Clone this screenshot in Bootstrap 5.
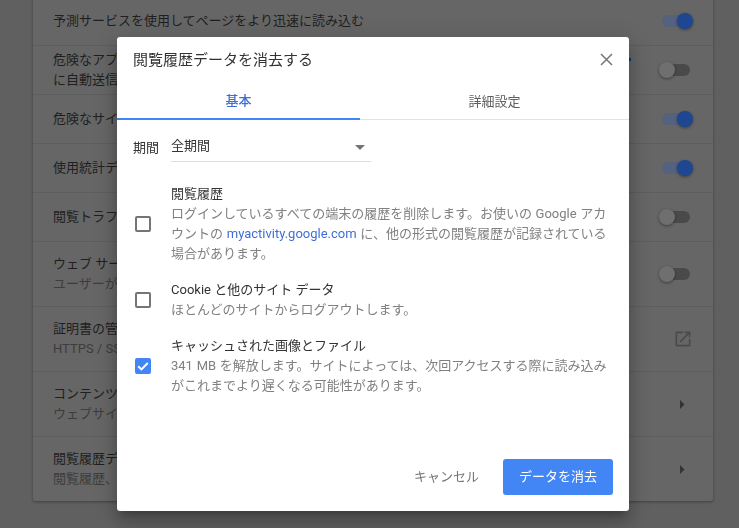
<!DOCTYPE html>
<html lang="ja">
<head>
<meta charset="utf-8">
<title>閲覧履歴データを消去する</title>
<link href="https://cdn.jsdelivr.net/npm/bootstrap@5.3.0/dist/css/bootstrap.min.css" rel="stylesheet">
<style>
html,body{height:528px;overflow:hidden}
body{background:#606060;font-family:Roboto,"Noto Sans CJK JP",sans-serif;font-size:13px;line-height:20px;color:#333}
.sheet{width:680px;margin:-3px 0 0 33px;height:504px;background:#666;border-radius:2px;box-shadow:0 1px 3px rgba(0,0,0,.35)}
.setrow{padding:0 20px;border-bottom:1px solid #5e5e5e;color:#1f1f1f;white-space:nowrap}
.rh1{height:49px}.rh2{height:65px}.rh3{height:64px;border-bottom:0}
.subt{color:#3d3d3d}
.wide-text{width:576px}
.peek{width:2px;height:3px;margin:-21px 0 0 0;background:#163566;flex:none}
.slot{width:34px;flex:none}
.tog{position:relative;width:34px;height:16px}
.tog::before{content:"";position:absolute;left:3px;right:3px;top:2px;height:12px;border-radius:6px;background:#4a4a4a}
.tog i{position:absolute;top:0;left:0;width:16px;height:16px;border-radius:50%;background:#6f6f6f;box-shadow:0 1px 3px rgba(0,0,0,.4)}
.tog.on::before{background:#54617f}
.tog.on i{left:18px;background:#1f4690}
.dlg-wrap{--bs-modal-width:512px;width:512px;max-width:none;margin:37px 0 0 117px}
.dlg{height:474px;border:0;border-radius:3px;box-shadow:0 12px 16px 1px rgba(0,0,0,.16),0 4px 22px 3px rgba(0,0,0,.14),0 6px 7px -4px rgba(0,0,0,.22)}
.dlg-head{padding:13px 16px 0;height:47px}
.dlg-title{font-size:15px;line-height:20px;color:#333}
.shut{width:13px;height:13px;padding:0;margin-top:3px;background:none;border:0;line-height:0}
.tabbar{height:36px;border-bottom:1px solid #e2e2e2}
.tabit{height:36px;line-height:30px;padding:0;border:0;border-radius:0;background:none;color:#5f5f5f;font-size:13px;text-align:center}
.tabit.first{width:243px;font-weight:500;color:#3f6fd6;border-bottom:2px solid #4285f4}
.tabit.second{width:269px}
.dlg-body{padding:16px 16px 0}
.rangerow{margin-bottom:22px}
.rangebox{width:200px;height:29px;margin-left:12px;padding-right:6px;border-bottom:1px solid #dcdcdc;color:#333;margin-top:-3px}
.rangeval{padding-bottom:2px}
.rangelab{color:#333;padding-bottom:3px}
.entrow{margin-top:16px}
.chk{width:16px;height:16px;flex:none;margin:0 20px 0 2px;border:2px solid #757575;border-radius:2px;line-height:0}
.chk.yes{background:#4285f4;border-color:#4285f4}
.ent{width:442px;color:#333}
.ent-sub{color:#808080;word-spacing:.5px}
.ent-sub a{color:#3f6fd6;text-decoration:none}
.dlg-foot{margin-top:auto;padding:0 16px 16px 0}
.nobtn{color:#757575;font-size:13px;padding:0;margin-right:24px;border:0;background:none}
.gobtn{width:110px;height:36px;padding:0;font-size:13px;color:#fff;border-radius:3px;background:#4285f4;border:0}
</style>
</head>
<body>
<div class="sheet">
  <div class="setrow rh1 d-flex align-items-center justify-content-between"><div>予測サービスを使用してページをより迅速に読み込む</div><div class="slot"><div class="tog on"><i></i></div></div></div>
  <div class="setrow rh1 d-flex align-items-center"><div class="wide-text">危険なアプ<br>に自動送信</div><div class="peek"></div><div class="slot ms-auto"><div class="tog"><i></i></div></div></div>
  <div class="setrow rh1 d-flex align-items-center justify-content-between"><div>危険なサイ</div><div class="slot"><div class="tog on"><i></i></div></div></div>
  <div class="setrow rh1 d-flex align-items-center justify-content-between"><div>使用統計デ</div><div class="slot"><div class="tog on"><i></i></div></div></div>
  <div class="setrow rh1 d-flex align-items-center justify-content-between"><div>閲覧トラフ</div><div class="slot"><div class="tog"><i></i></div></div></div>
  <div class="setrow rh2 d-flex align-items-center justify-content-between"><div>ウェブ サー<div class="subt">ユーザーが</div></div><div class="slot"><div class="tog"><i></i></div></div></div>
  <div class="setrow rh2 d-flex align-items-center justify-content-between"><div>証明書の管<div class="subt">HTTPS / SS</div></div><div class="slot d-flex justify-content-end"><svg width="20" height="20" viewBox="0 0 24 24" fill="#4a4a4a"><path d="M19 19H5V5h7V3H5c-1.11 0-2 .9-2 2v14c0 1.1.89 2 2 2h14c1.1 0 2-.9 2-2v-7h-2v7zM14 3v2h3.59l-9.83 9.83 1.41 1.41L19 6.41V10h2V3h-7z"/></svg></div></div>
  <div class="setrow rh2 d-flex align-items-center justify-content-between"><div>コンテンツ<div class="subt">ウェブサイ</div></div><div class="slot d-flex justify-content-end"><svg class="me-2" width="5" height="9" viewBox="0 0 5 9" fill="#333"><path d="M0 0l4.5 4.5L0 9z"/></svg></div></div>
  <div class="setrow rh3 d-flex align-items-center justify-content-between"><div>閲覧履歴デ<div class="subt">閲覧履歴、</div></div><div class="slot d-flex justify-content-end"><svg class="me-2" width="5" height="9" viewBox="0 0 5 9" fill="#333"><path d="M0 0l4.5 4.5L0 9z"/></svg></div></div>
</div>

<div class="modal d-block" tabindex="-1">
  <div class="modal-dialog dlg-wrap">
    <div class="modal-content dlg">
      <div class="dlg-head d-flex justify-content-between align-items-start">
        <div class="dlg-title">閲覧履歴データを消去する</div>
        <button type="button" class="shut" aria-label="閉じる"><svg width="13" height="13" viewBox="0 0 13 13"><path d="M1 1l11 11M12 1L1 12" stroke="#757575" stroke-width="1.5" fill="none"/></svg></button>
      </div>
      <div class="tabbar d-flex">
        <button type="button" class="tabit first">基本</button>
        <button type="button" class="tabit second">詳細設定</button>
      </div>
      <div class="dlg-body">
        <div class="d-flex align-items-center rangerow">
          <div class="rangelab">期間</div>
          <div class="rangebox d-flex align-items-center justify-content-between">
            <span class="rangeval">全期間</span>
            <svg width="10" height="5" viewBox="0 0 10 5" fill="#757575"><path d="M0 0h10L5 5z"/></svg>
          </div>
        </div>
        <div>
          <div class="d-flex align-items-center entrow">
            <div class="chk"></div>
            <div class="ent">閲覧履歴<div class="ent-sub">ログインしているすべての端末の履歴を削除します。お使いの Google アカウントの <a href="#">myactivity.google.com</a> に、他の形式の閲覧履歴が記録されている場合があります。</div></div>
          </div>
          <div class="d-flex align-items-center entrow">
            <div class="chk"></div>
            <div class="ent">Cookie と他のサイト データ<div class="ent-sub">ほとんどのサイトからログアウトします。</div></div>
          </div>
          <div class="d-flex align-items-center entrow">
            <div class="chk yes"><svg width="12" height="12" viewBox="0 0 12 12"><path d="M1.2 6.2l3.2 3.2L10.8 3" stroke="#fff" stroke-width="2" fill="none"/></svg></div>
            <div class="ent">キャッシュされた画像とファイル<div class="ent-sub">341 MB を解放します。サイトによっては、次回アクセスする際に読み込みがこれまでより遅くなる可能性があります。</div></div>
          </div>
        </div>
      </div>
      <div class="dlg-foot d-flex justify-content-end align-items-center">
        <button type="button" class="nobtn">キャンセル</button>
        <button type="button" class="btn gobtn">データを消去</button>
      </div>
    </div>
  </div>
</div>
<script src="https://cdn.jsdelivr.net/npm/bootstrap@5.3.0/dist/js/bootstrap.bundle.min.js"></script>
</body>
</html>
